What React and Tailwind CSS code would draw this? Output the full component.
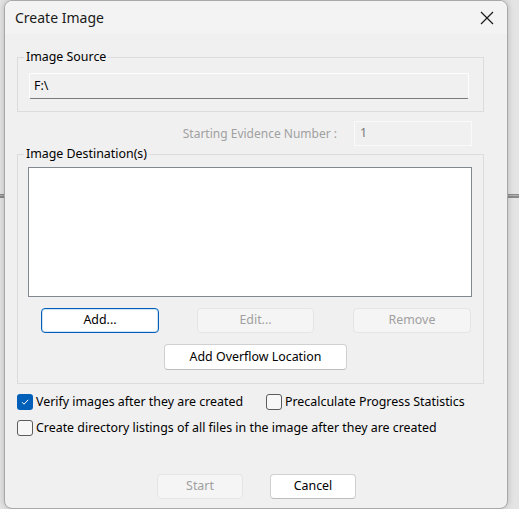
import { useState } from 'react'

function Check({ checked, onChange, label, className = '' }) {
  return (
    <label className={`flex items-center gap-[3px] cursor-default ${className}`}>
      <span
        onClick={onChange}
        className={
          checked
            ? 'w-[16px] h-[16px] rounded-[3px] bg-[#005fb8] flex items-center justify-center'
            : 'w-[16px] h-[16px] rounded-[3px] border border-[#5c5c5c] bg-[#f7f7f7]'
        }
      >
        {checked && (
          <svg width="10" height="10" viewBox="0 0 10 10" fill="none">
            <path d="M2 5.2 L4 7.2 L8.2 2.8" stroke="white" strokeWidth="1" />
          </svg>
        )}
      </span>
      <span onClick={onChange}>{label}</span>
    </label>
  )
}

function Btn({ children, disabled, focused, className = '' }) {
  let cls = 'h-[25px] rounded-[4px] border flex items-center justify-center '
  if (disabled) cls += 'bg-[#f5f5f5] border-[#e5e5e5] text-[#a0a0a0]'
  else if (focused) cls += 'bg-white border-[#005fb8] text-black shadow-[inset_0_0_0_1px_#cfe3f5]'
  else cls += 'bg-white border-[#d0d0d0] border-b-[#bcbcbc] text-black'
  return <button className={`${cls} ${className}`}>{children}</button>
}

export default function App() {
  const [verify, setVerify] = useState(true)
  const [precalc, setPrecalc] = useState(false)
  const [listings, setListings] = useState(false)

  return (
    <div
      className="relative w-[519px] h-[509px] bg-[#e4e4e4] overflow-hidden text-[12.4px] text-black"
      style={{ fontFamily: '"Noto Sans", "Liberation Sans", sans-serif' }}
    >
      <div className="absolute left-0 right-0 top-[194px] h-[4px] bg-[#8a8a8a]" />
      <div className="absolute left-0 right-0 top-[195px] h-[1px] bg-[#b0b0b0]" />

      <div className="relative ml-[4px] w-[504px] h-[509px] border border-[#a8a8a8] rounded-[8px] bg-[#f0f0f0] shadow-[0_0_6px_rgba(0,0,0,0.2)] overflow-hidden flex flex-col">
        {/* title bar */}
        <div className="h-[33px] bg-[#f3f3f3] flex items-center justify-between pl-[10px] pr-[13px]">
          <span className="text-[14px] text-[#1a1a1a]">Create Image</span>
          <svg width="14" height="14" viewBox="0 0 14 14">
            <path d="M1 1 L13 13 M13 1 L1 13" stroke="#1a1a1a" strokeWidth="1.2" />
          </svg>
        </div>

        {/* image source */}
        <fieldset className="mt-[15px] ml-[12px] w-[467px] border border-[#dcdcdc] pl-[11px] pt-[8px] pb-[12px]">
          <legend className="-ml-[5px] px-[2px] leading-[16px]">Image Source</legend>
          <div className="w-[440px] h-[26px] bg-[#f0f0f0] border border-[#fdfdfd] border-b-[#7a7a7a] rounded-[2px] flex items-center pl-[4px]">
            F:\
          </div>
        </fieldset>

        {/* starting evidence number */}
        <div className="ml-[12px] w-[467px] flex items-center justify-end pr-[12px] mt-[9px]">
          <span className="text-[#a0a0a0] text-[12px] mr-[17px]">Starting Evidence Number :</span>
          <div className="w-[118px] h-[25px] border border-[#fafafa] bg-[#f0f0f0] flex items-center pl-[5px] text-[#7a7a7a]">
            1
          </div>
        </div>

        {/* image destination */}
        <fieldset className="ml-[12px] w-[467px] border border-[#dcdcdc] pl-[10px] pt-[5px] pb-[13px]">
          <legend className="-ml-[4px] px-[2px] leading-[16px]">Image Destination(s)</legend>
          <div className="w-[444px] h-[130px] bg-white border border-[#828790]" />
          <div className="flex mt-[11px]">
            <Btn focused className="ml-[13px] w-[118px]">Add...</Btn>
            <Btn disabled className="ml-[38px] w-[117px]">Edit...</Btn>
            <Btn disabled className="ml-[39px] w-[118px]">Remove</Btn>
          </div>
          <Btn className="ml-[136px] mt-[11px] w-[183px] h-[26px]">Add Overflow Location</Btn>
        </fieldset>

        {/* options */}
        <div className="ml-[12px] mt-[9px] flex items-center h-[18px]">
          <Check checked={verify} onChange={() => setVerify(!verify)} label="Verify images after they are created" />
          <Check
            checked={precalc}
            onChange={() => setPrecalc(!precalc)}
            label="Precalculate Progress Statistics"
            className="absolute left-[261px]"
          />
        </div>
        <div className="ml-[12px] mt-[8px] flex items-center h-[18px]">
          <Check
            checked={listings}
            onChange={() => setListings(!listings)}
            label="Create directory listings of all files in the image after they are created"
          />
        </div>

        {/* bottom buttons */}
        <div className="flex mt-[37px] ml-[152px]">
          <Btn disabled className="w-[86px]">Start</Btn>
          <Btn className="ml-[27px] w-[86px]">Cancel</Btn>
        </div>
      </div>
    </div>
  )
}
